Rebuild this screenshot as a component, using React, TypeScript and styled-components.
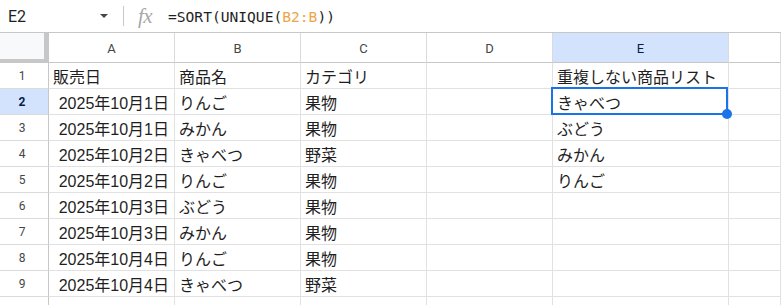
import React from "react";
import styled, { createGlobalStyle } from "styled-components";

const GlobalStyle = createGlobalStyle`
  html, body {
    margin: 0;
    padding: 0;
    background: #fff;
    overflow: hidden;
  }
  body {
    font-family: "Liberation Sans", "Noto Sans CJK JP", sans-serif;
  }
`;

const COLUMNS = ["A", "B", "C", "D", "E"];

const ROWS: string[][] = [
  ["販売日", "商品名", "カテゴリ", "", "重複しない商品リスト"],
  ["2025年10月1日", "りんご", "果物", "", "きゃべつ"],
  ["2025年10月1日", "みかん", "果物", "", "ぶどう"],
  ["2025年10月2日", "きゃべつ", "野菜", "", "みかん"],
  ["2025年10月2日", "りんご", "果物", "", "りんご"],
  ["2025年10月3日", "ぶどう", "果物", "", ""],
  ["2025年10月3日", "みかん", "果物", "", ""],
  ["2025年10月4日", "りんご", "果物", "", ""],
  ["2025年10月4日", "きゃべつ", "野菜", "", ""],
  ["", "", "", "", ""],
];

const isDate = (v: string) => /^\d{4}年/.test(v);

function App() {
  return (
    <Page>
      <GlobalStyle />
      <FormulaBar>
        <NameBox>
          <span>E2</span>
          <Caret />
        </NameBox>
        <Divider />
        <FxIcon>fx</FxIcon>
        <Formula>
          =SORT(UNIQUE(<RangeRef>B2:B</RangeRef>))
        </Formula>
      </FormulaBar>

      <Sheet>
        <Corner />
        {COLUMNS.map((c) => (
          <ColHeader key={c} active={c === "E"}>
            {c}
          </ColHeader>
        ))}
        <ColHeader active={false} />

        {ROWS.map((row, r) => (
          <React.Fragment key={r}>
            <RowHeader active={r === 1}>{r + 1}</RowHeader>
            {row.map((v, c) => (
              <Cell key={c} alignRight={isDate(v)} selected={r === 1 && c === 4}>
                {v}
                {r === 1 && c === 4 && (
                  <Selection>
                    <Handle />
                  </Selection>
                )}
              </Cell>
            ))}
            <Cell alignRight={false} />
          </React.Fragment>
        ))}
      </Sheet>
    </Page>
  );
}

export default App;

// styled components

const Page = styled.div`
  width: 781px;
  height: 305px;
  overflow: hidden;
`;

const FormulaBar = styled.div`
  height: 33px;
  box-sizing: border-box;
  border-bottom: 1px solid #c7c7c7;
  display: flex;
  align-items: center;
`;

const NameBox = styled.div`
  width: 116px;
  padding-left: 8px;
  box-sizing: border-box;
  display: flex;
  align-items: center;
  justify-content: space-between;
  padding-right: 8px;
  font-family: "Roboto", "Liberation Sans", sans-serif;
  font-size: 16px;
  color: #1f1f1f;
`;

const Caret = styled.span`
  width: 0;
  height: 0;
  border-left: 4.5px solid transparent;
  border-right: 4.5px solid transparent;
  border-top: 4.5px solid #444746;
`;

const Divider = styled.div`
  width: 1px;
  height: 20px;
  background: #c7c7c7;
  margin-left: 7px;
`;

const FxIcon = styled.span`
  margin-left: 14px;
  width: 30px;
  font-family: "Liberation Serif", serif;
  font-style: italic;
  font-size: 21px;
  line-height: 1;
  color: #a8a8a8;
  letter-spacing: -0.5px;
`;

const Formula = styled.span`
  font-family: "DejaVu Sans Mono", monospace;
  font-size: 14.6px;
  color: #1f1f1f;
`;

const RangeRef = styled.span`
  color: #f0a545;
`;

const Sheet = styled.div`
  display: grid;
  grid-template-columns: 49px 126px 126px 126px 126px 176px 1fr;
  grid-template-rows: 30px repeat(10, 26px);
`;

const Corner = styled.div`
  box-sizing: border-box;
  background: #f8f9fa;
  border-right: 5px solid #c7c7c7;
  border-bottom: 4px solid #c7c7c7;
`;

const ColHeader = styled.div<{ active?: boolean }>`
  box-sizing: border-box;
  border-right: 1px solid #dadada;
  border-bottom: 1px solid #c7c7c7;
  background: ${(p) => (p.active ? "#d3e3fd" : "#fff")};
  color: ${(p) => (p.active ? "#041e49" : "#444746")};
  display: flex;
  align-items: center;
  justify-content: center;
  font-family: "Roboto", "Liberation Sans", sans-serif;
  font-size: 13px;
  padding-top: 1px;
`;

const RowHeader = styled.div<{ active?: boolean }>`
  box-sizing: border-box;
  border-right: 1px solid #c7c7c7;
  border-bottom: 1px solid #dadada;
  background: ${(p) => (p.active ? "#d3e3fd" : "#fff")};
  color: ${(p) => (p.active ? "#041e49" : "#444746")};
  font-weight: ${(p) => (p.active ? 700 : 400)};
  display: flex;
  align-items: center;
  justify-content: center;
  padding-right: 4px;
  font-family: "Roboto", "Liberation Sans", sans-serif;
  font-size: 12px;
`;

const Cell = styled.div<{ alignRight?: boolean; selected?: boolean }>`
  position: relative;
  z-index: ${(p) => (p.selected ? 2 : "auto")};
  box-sizing: border-box;
  border-right: 1px solid #e1e1e1;
  border-bottom: 1px solid #e1e1e1;
  display: flex;
  align-items: center;
  justify-content: ${(p) => (p.alignRight ? "flex-end" : "flex-start")};
  padding: 1px 5px 0 4px;
  font-size: 16px;
  color: #1f1f1f;
  white-space: nowrap;
`;

const Selection = styled.div`
  position: absolute;
  top: -2px;
  left: -2px;
  right: 0;
  bottom: -1px;
  border: 2px solid #1a73e8;
  pointer-events: none;
`;

const Handle = styled.div`
  position: absolute;
  right: -6px;
  bottom: -6px;
  width: 10px;
  height: 10px;
  border-radius: 50%;
  background: #1a73e8;
`;
